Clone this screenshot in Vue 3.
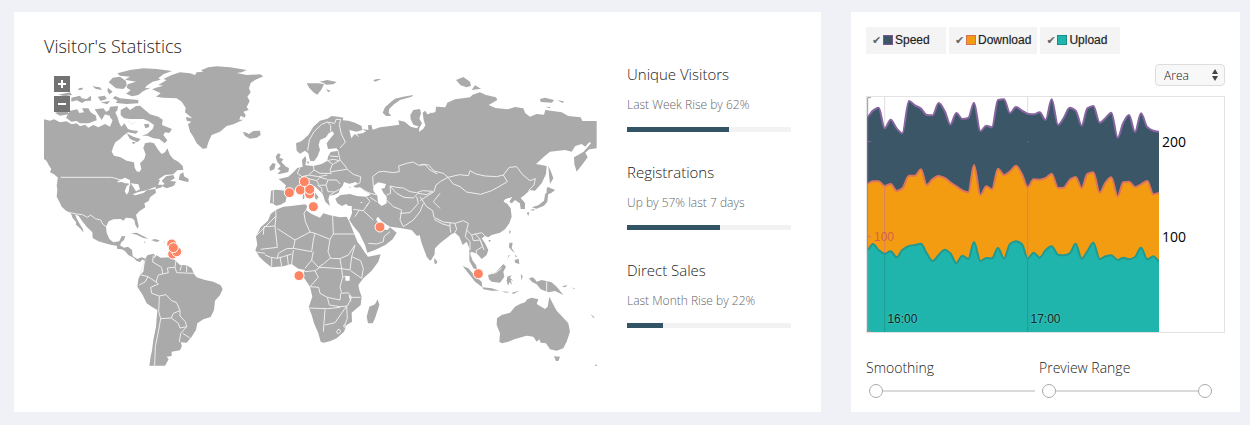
<script setup>
import { ref } from 'vue'

const stats = [
  { title: 'Unique Visitors', note: 'Last Week Rise by 62%', value: 62 },
  { title: 'Registrations', note: 'Up by 57% last 7 days', value: 57 },
  { title: 'Direct Sales', note: 'Last Month Rise by 22%', value: 22 }
]

// Each sheet of the map has its own origin; outlines are local to it.
const sheets = [
  {
    at: 'translate(90 165)',
    land: 'M42,193L60,197 72,193 90,202 110,199 125,208 140,205 150,214 165,209 175,218 190,210 205,217 225,207 240,215 246,200 252,180 262,185 268,205 274,215 283,205 294,222 306,226 325,228 318,236 294,232 280,242 270,252 256,262 250,275 245,290 252,302 270,306 290,317 312,322 314,338 320,349 328,351 334,342 330,325 343,312 347,298 340,280 345,265 360,262 372,265 385,285 395,297 405,292 412,280 420,300 430,312 445,320 458,333 460,345 442,346 430,358 405,360 390,370 375,385 380,390 84,390 82,376 84,368 72,358 60,352 64,342 56,330 50,318 42,312zM395,378L408,364 430,360 434,370 420,378 440,380 428,392 405,388zM446,374L450,358 460,352 462,364 476,372 475,382zM366,103L378,98 400,92 385,90 410,75 400,72 425,60 450,52 480,55 495,60 500,52 520,50 513,46 535,37 560,34 600,37 650,45 635,52 620,54 650,60 690,58 700,64 675,75 662,84 657,100 662,112 652,125 659,138 650,156 656,165 640,170 647,180 644,188 632,182 628,194 640,194 610,208 590,213 570,230 545,240 535,262 530,280 518,281 500,265 490,245 480,230 474,208 484,200 470,197 468,186 487,190 465,172 467,158 455,140 440,130 400,128 378,125 392,115zM638,230L650,233 657,237 670,228 690,227 692,240 680,248 660,251 645,243zM262,55L300,45 340,40 380,42 426,48 400,58 385,70 392,74 368,80 350,92 345,100 362,98 340,108 325,120 306,124 288,116 302,106 290,98 293,88 318,80 285,74 300,65 270,62zM236,82L248,68 270,65 288,78 290,92 280,102 258,100zM256,123L270,130 325,135 325,145 290,147 258,144 262,136 248,130zM187,94L210,97 216,105 198,102zM148,99L160,98 156,104 144,106zM203,125L225,122 230,132 212,138zM212,142L240,138 232,148zM234,98L248,110 238,118 232,108zM124,128L150,122 155,130 170,132 183,122 183,137 166,138 156,144 140,136 124,140zM85,119L120,112 126,120 105,124zM75,174L96,166 112,166 116,178 90,182zM120,167L142,163 148,174 162,172 156,160 175,160 182,172 198,182 200,196 176,205 150,205 140,198 124,200 108,188zM194,163L220,160 228,170 240,165 238,182 225,178 215,195 205,180zM240,155L264,153 262,166 256,172 262,186 254,202 241,188 236,170zM272,165L290,155 300,165 318,153 330,152 345,165 360,178 385,185 398,194 396,210 426,222 418,234 405,232 400,240 412,256 404,265 388,252 370,250 352,242 336,242 352,236 368,222 372,210 355,198 340,192 325,192 300,192 282,190 272,180zM290,235L310,245 332,252 322,262 300,252zM305,260L318,262 310,268zM342,208L356,206 358,216 346,220z',
    water: 'M260,380L285,368 300,376 280,382z',
    border: 'M92,367H245L270,374 300,386M295,196L304,208 316,202'
  },
  {
    at: 'translate(90 540)',
    land: 'M84,0L80,15 82,30 80,50 88,65 95,80 108,92 122,98 128,114 138,126 138,134 150,145 160,157 159,148 148,130 140,115 135,103 146,108 158,125 170,140 187,157 188,174 205,184 225,190 245,195 260,197 262,207 275,208 285,213 295,225 312,234 320,243 330,246 338,238 343,244 348,236 335,232 322,237 308,228 306,210 294,200 282,203 270,196 274,187 282,180 286,168 275,169 268,184 250,187 238,177 230,158 228,140 236,124 250,118 272,117 280,122 288,113 305,115 313,120 316,135 323,146 326,138 322,120 318,105 328,94 346,82 343,70 356,63 360,52 378,38 376,28 395,22 398,14 384,14 390,0zM395,18L408,8 428,14 437,12 430,18 410,25zM303,160L320,158 335,166 355,176 340,174 320,164zM342,185L350,186 342,188zM363,180L376,177 390,182 380,186zM400,185H405V188zM343,242L352,226 370,221 375,226 370,238 380,226 392,233 420,232 435,241 450,255 470,256 485,265 492,282 500,292 525,300 550,305 572,316 578,328 570,345 555,362 552,390 542,411 520,418 502,430 498,450 485,470 470,488 452,487 456,498 450,511 425,515 425,528 410,530 416,538 405,557 358,557 362,530 366,512 370,480 378,440 382,390 365,380 350,370 338,345 322,320 325,298 330,285 340,275 343,255z',
    water: 'M262,9L276,-2 300,0 300,10 284,10 276,4zM302,10L290,18 284,34 290,44 296,36 298,20zM302,10L325,13 330,28 318,34 308,18zM308,43L325,36 352,30 340,39 316,46zM350,30L378,20 376,27z',
    border: 'M122,98L140,102 158,104 172,112 182,105 196,116 212,120 218,132 228,140M345,242L330,284 354,290 378,306 385,312 362,322 365,340 388,348M328,315L345,306 354,290M378,306L385,285 398,282 395,262 368,246 370,226M398,282L415,278 412,264 435,262 438,240M435,262L440,278 490,280M455,256L450,272M470,256L470,276M388,348L408,344 425,362 440,368 450,392 430,400 424,414 392,416 386,395 388,348M450,392L450,408 466,425 470,440 450,444 445,430 424,414M470,440L452,460 448,486M458,460L480,474M392,416L386,450 376,500 374,557'
  },
  {
    at: 'translate(720 180)',
    land: 'M168,250L185,243 205,225 220,200 240,182 262,176 275,168 294,170 310,173 308,181 325,182 345,188 365,198 367,210 350,215 328,210 334,235 344,222 358,232 350,222 368,220 378,214 367,207 385,210 384,196 394,194 398,209 420,202 450,198 478,194 475,181 494,185 512,200 530,205 545,190 538,205 537,216 550,206 556,196 551,180 548,158 556,152 562,163 590,155 588,142 600,140 600,434 440,434 380,436 364,426 350,438 326,438 318,432 306,438 292,430 286,416 302,405 330,402 350,408 378,410 392,404 382,396 360,382 348,383 338,378 330,384 326,376 346,366 330,372 312,366 308,378 300,386 296,398 284,404 268,407 265,418 270,438 256,425 248,402 226,380 216,376 214,384 236,412 228,420 222,402 204,386 180,390 165,394 150,398 140,407 137,425 122,434 108,437 98,430 90,430 93,392 110,389 135,392 137,375 116,357 130,354 145,350 160,337 172,324 188,320 186,300 196,288 199,298 196,316 220,318 245,312 262,302 264,290 272,276 295,272 290,265 264,267 260,250 270,236 282,222 278,214 266,220 258,232 240,240 236,255 240,270 232,290 222,304 210,302 205,280 195,272 180,281 170,272zM107,290L114,280 122,283 118,293 130,297 124,306 138,320 147,324 145,336 130,340 112,343 122,331 112,328 122,318 112,306zM88,322L98,309 107,312 103,328 90,333zM200,70L220,70 235,70 252,72 245,88 232,104 222,98 208,84zM238,65L262,60 290,66 280,73 258,74 250,68zM258,88L272,92 265,97zM428,158L435,142 450,128 465,116 490,110 520,105 515,110 480,120 462,133 448,146 446,158 454,168 438,168zM512,178L511,165 520,150 540,147 543,160 538,176 546,190 540,200 520,194zM400,60L412,57 424,58 404,65zM189,402L194,405 192,418 188,416zM200,304L208,306 204,312z',
    water: 'M400,378L415,367 438,372 434,384 424,386 430,398 440,410 440,430 425,438 414,428 412,408 400,392zM320,374L348,366 352,371 334,383z',
    border: 'M203,272L208,240 222,215 245,193 262,186 272,196 272,215M262,186L284,190 288,178 302,178 298,194 304,222 316,246 300,264M294,272L300,300 316,318 322,328 340,343 362,350 360,368 348,374M262,302L280,298 298,302M270,288L294,290M262,302L278,312 270,330 274,340 240,340 222,330 220,318M280,312L298,302M274,335L320,328M180,322L172,340 186,350 206,345 236,350 262,345M176,352L188,370 206,356 230,362 240,352 262,358M206,345L222,330M230,362L238,376 258,375 264,360 290,360 300,372M232,376L245,384 246,398M258,375L264,395 284,396 298,388M136,392L154,396M100,392V428M400,378L398,350 415,336 430,334 460,338 478,335 476,318 500,310 520,306 536,316 554,312 570,330 592,342M440,405L452,400 450,378 470,382 490,384 510,395 530,398 548,392 578,394M450,378L470,400 492,412 520,414 534,400 560,404 578,394M370,392L392,400 408,404M378,410L390,424 380,438M390,412L410,425M268,407L284,396M188,350L182,376'
  },
  {
    at: 'translate(720 570)',
    land: 'M107,60L130,50 160,47 195,43 202,48 198,60 215,72 240,83 250,70 270,76 300,82 320,80 328,95 340,125 352,155 362,168 375,188 384,200 422,193 415,215 395,242 370,265 355,285 358,300 365,320 362,345 335,368 336,395 320,405 312,425 290,445 270,454 250,458 242,455 235,430 222,400 215,375 206,352 217,320 210,290 200,275 188,258 195,240 175,236 155,222 130,229 95,232 75,217 58,200 46,180 52,165 48,140 62,112 84,92 92,72zM335,45L346,40 385,38 440,30 600,0V150L582,170 584,192 572,212 560,192 552,165 543,136 530,137 515,120 480,114 450,110 425,94 414,80 408,88 418,104 428,118 442,120 450,112 470,128 458,148 436,165 405,180 382,188 375,165 358,130 340,108 328,90 336,70zM413,328L418,345 405,385 398,400 384,400 380,380 388,350 405,343zM584,205L592,215 588,223 583,218z',
    water: 'M316,258H329V272H316zM326,315L332,318 334,338 330,330z',
    border: 'M107,60L108,78 50,136M108,78L105,108 72,110 70,134M105,108L112,172 62,178M112,116L165,150 210,126 196,95 192,70 198,60M165,150L160,175 215,185 220,150 225,130 210,126M225,130L270,148 280,132 278,78M280,132H345M270,148L264,185 272,205 300,206 325,195 345,165M220,185L215,210 235,232 250,222 270,205M160,180L155,222M160,175L140,176 115,190 112,205 130,200 155,192M120,200L125,228M142,198L145,225M95,202V230M75,195L92,202 112,205M50,186L75,190M215,210L195,235M195,245L225,242 240,232 305,236 300,206M225,242L235,262 210,290 236,292 240,310 262,322 268,345 300,350 322,348 335,322H362M305,236L330,240 335,200 362,212 370,236 365,265 332,242M305,236L308,262 300,290 305,310 325,308 335,322M308,262L316,258M206,354L262,356 300,352M255,358L250,425M255,405L285,398 320,348M320,350L322,385 314,405M262,322L300,330 302,310M335,200L345,165M340,58L370,62 385,40M370,62L400,90M345,80L358,60M385,160L410,162 430,155 432,140 450,125M440,30L460,50 485,60 480,90 490,110M480,70L510,68 535,40 530,20M490,110L520,90 540,65 550,40M600,10L580,35 600,55M291,422L297,417 302,424 296,431 290,428zM312,404L318,406 316,413 311,410z'
  },
  {
    at: 'translate(1260 180)',
    land: 'M30,158L46,160 48,140 76,142 82,128 105,118 150,112 158,104 180,97 198,105 228,112 232,120 206,135 226,144 262,148 285,141 310,145 316,160 330,170 350,162 372,164 376,150 425,157 445,168 482,172 487,183 530,183V265L508,268 496,278 503,292 488,312 470,335 463,312 462,292 490,276 513,250 508,246 496,260 485,252 466,258 455,275 435,270 390,275 370,292 348,312 380,318 378,342 365,370 345,392 330,390 314,405 302,414 315,430 315,447 302,447 300,430 285,418 275,430 268,426 278,410 255,416 250,425 262,432 272,450H20zM385,318L392,332 400,355 390,372 387,345zM382,380L405,390 395,398 380,405zM108,60L130,51 150,65 153,77 140,82 122,76zM155,90L165,76 183,86zM360,117L375,113 402,120 396,128 362,126zM411,121L431,124 429,129zM378,140L392,141 388,145z',
    water: '',
    border: 'M0,315L25,314 42,333 70,340 84,352 62,364 48,375 42,395 0,422M84,352L118,344 145,347 150,332 168,342 195,348 230,350 250,345 262,365 240,378 215,392 182,403 140,396 120,380 100,372 84,352M250,345L268,322 290,320 308,344 330,362 346,356 342,375 325,392'
  },
  {
    at: 'translate(1260 570)',
    land: 'M0,0H330L305,15 300,25 312,35 315,50 305,57 300,40 285,30 275,40 270,32 278,20 255,28 250,35 262,42 272,55 275,80 268,100 255,118 240,128 215,135 205,142 195,138 185,145 195,160 205,180 200,195 185,207 172,192 155,185 150,190 158,212 168,225 172,240 160,235 148,212 148,175 140,155 128,165 118,140 105,128 95,132 85,140 60,160 45,175 42,195 30,212 20,200 5,160 0,140zM376,10L385,8 382,35 372,47 350,56 335,52 355,46 372,32zM330,60L345,56 340,62zM320,68L328,66 325,78zM380,-5L405,0 392,6 380,14zM268,120L273,125 268,133zM205,150L213,150 208,157zM268,158L278,158 275,175 285,188 276,182 267,172zM284,210L296,206 298,222 285,218zM285,193L292,202 286,200zM270,195L262,206 266,196zM43,205L51,215 45,223zM128,228L145,235 165,258 185,275 187,292 165,275 145,250zM187,292L215,295 238,302 215,302 190,298zM204,255L225,250 250,222 258,230 250,245 253,260 240,278 215,275 207,268zM262,260L275,256 270,264 280,272 272,270 276,284 268,276 264,288 260,272zM302,252L308,258 305,272zM245,304L270,306 258,308zM275,308L298,302 280,312zM327,265L338,262 345,268 350,275 365,270 395,277 410,290 430,315 405,303 385,307 362,298 350,283 335,275zM425,290L442,284 436,292zM231,385L245,375 270,368 285,350 300,342 315,337 322,328 335,323 355,328 350,342 375,357 383,350 388,320 398,340 410,362 425,378 445,400 450,425 440,455 430,475 410,482 390,478 378,460 362,458 358,448 350,455 340,440 320,437 285,447 265,455 245,460 238,455 240,430 230,405zM402,499L420,500 415,513 408,513zM512,373L523,381 520,384zM456,292L465,296 462,298zM526,524H531V528H526z',
    water: '',
    border: 'M0,20L20,50 38,62 42,82 70,96 105,100 130,92 145,100 140,120 155,135 185,128 195,138M42,88L68,102 90,108 90,98M90,108L92,128M105,100L110,118 104,128M140,120L136,140 150,155 150,180M155,135L160,152 180,150 188,170 168,182 170,192M165,130L180,148 192,180M380,275V306M208,250L228,248 245,234'
  }
]

const markers = [
  [515, 732], [518, 762], [530, 755], [520, 743],
  [868, 578], [901, 570], [929, 582], [929, 568], [913, 545], [940, 620],
  [1140, 681], [897, 827], [1435, 821]
]

const xs = [36, 54, 71, 89, 107, 125, 142, 162, 180, 198, 215, 233, 251, 269, 286, 304, 322, 340, 357, 376, 394, 411, 429, 447, 465, 483, 501, 518, 536, 554, 572, 590, 609, 626, 644, 662, 680, 697, 715, 734, 752, 769, 788, 805, 822, 840, 858, 877, 895, 912]
const levels = {
  speed: [80, 62, 53, 115, 89, 115, 130, 33, 46, 56, 75, 76, 39, 63, 104, 69, 87, 84, 38, 124, 107, 112, 30, 28, 69, 51, 62, 71, 73, 67, 90, 28, 105, 84, 53, 62, 107, 55, 48, 98, 84, 68, 143, 98, 75, 126, 70, 112, 122, 125],
  download: [281, 274, 274, 288, 282, 303, 295, 257, 257, 238, 285, 267, 258, 264, 277, 289, 301, 307, 225, 315, 289, 298, 236, 255, 244, 227, 253, 291, 268, 269, 264, 251, 294, 293, 270, 261, 294, 252, 247, 308, 277, 262, 319, 277, 275, 291, 283, 273, 313, 309],
  upload: [480, 462, 480, 491, 484, 502, 480, 468, 465, 461, 490, 513, 495, 479, 490, 519, 497, 507, 456, 513, 504, 505, 474, 506, 462, 454, 463, 505, 488, 503, 480, 469, 494, 496, 490, 461, 506, 484, 458, 507, 499, 496, 510, 503, 508, 501, 473, 508, 499, 512]
}

// Monotone cubic: the slope is zero at each peak and dip.
function curve(ys) {
  const slope = ys.map((y, i) => {
    if (i === 0 || i === ys.length - 1) return 0
    const a = (y - ys[i - 1]) / (xs[i] - xs[i - 1])
    const b = (ys[i + 1] - y) / (xs[i + 1] - xs[i])
    return a * b <= 0 ? 0 : (2 * a * b) / (a + b)
  })
  let d = `M${xs[0]},${ys[0]}`
  for (let i = 1; i < ys.length; i++) {
    const h = (xs[i] - xs[i - 1]) / 3
    d += `C${xs[i - 1] + h},${ys[i - 1] + slope[i - 1] * h} ${xs[i] - h},${ys[i] - slope[i] * h} ${xs[i]},${ys[i]}`
  }
  return d
}

const series = ref([
  { id: 'speed', name: 'Speed', on: true },
  { id: 'download', name: 'Download', on: true },
  { id: 'upload', name: 'Upload', on: true }
])
const kind = ref('Area')
const smoothing = ref(0)
const from = ref(0)
const to = ref(100)
</script>

<template>
  <main class="page">
    <section class="card visitors">
      <h2 class="title">Visitor's Statistics</h2>
      <div class="split">
        <div class="map">
          <svg class="world" viewBox="132 198 1659 900" role="img" aria-label="World map of visitors">
            <g v-for="s in sheets" :key="s.at" :transform="s.at">
              <path class="land" :d="s.land" />
            </g>
            <g v-for="s in sheets" :key="s.at" :transform="s.at">
              <path class="water" :d="s.water" />
              <path class="border" :d="s.border" />
            </g>
            <circle v-for="(m, i) in markers" :key="i" class="marker" :cx="m[0]" :cy="m[1]" r="15" />
          </svg>
          <div class="zoom">
            <button type="button" aria-label="Zoom in">
              <svg viewBox="0 0 16 16"><path d="M4 8h8M8 4v8" /></svg>
            </button>
            <button type="button" aria-label="Zoom out">
              <svg viewBox="0 0 16 16"><path d="M4 8h8" /></svg>
            </button>
          </div>
        </div>
        <div class="stats">
          <article v-for="s in stats" :key="s.title" class="stat">
            <h3>{{ s.title }}</h3>
            <p>{{ s.note }}</p>
            <div class="bar"><div class="fill" :style="{ width: s.value + '%' }"></div></div>
          </article>
        </div>
      </div>
    </section>

    <section class="card traffic">
      <div class="legend">
        <label v-for="s in series" :key="s.id" class="key">
          <input v-model="s.on" type="checkbox" />
          <span class="swatch" :class="s.id"></span>
          <span>{{ s.name }}</span>
        </label>
      </div>
      <div class="picker">
        <select v-model="kind" aria-label="Chart type">
          <option>Area</option>
          <option>Bar</option>
          <option>Line</option>
        </select>
        <svg class="arrows" viewBox="0 0 6 12"><path d="M0 5L3 0 6 5zM0 7L3 12 6 7z" /></svg>
      </div>
      <div class="chart">
        <div class="plot">
          <svg viewBox="36 21 876 705" preserveAspectRatio="none" role="img" aria-label="Speed, download and upload">
            <path class="rule" d="M89,21V726M518,21V726" />
            <g v-for="s in series" v-show="s.on" :key="s.id" :class="s.id">
              <path class="area" :d="curve(levels[s.id]) + 'V726H36z'" />
              <path class="edge" :d="curve(levels[s.id])" />
            </g>
            <path class="rule warm" d="M89,290V489M518,293V503" />
            <path class="rule" d="M89,493V726M518,507V726" />
            <path class="axis" d="M48,23H38V80M38,480V724H48" />
            <path class="axis violet" d="M38,80V281M38,155H48M516,155H520" />
            <path class="axis coral" d="M38,281V480M38,440H48" />
          </svg>
          <span class="inner">100</span>
          <span class="time first">16:00</span>
          <span class="time second">17:00</span>
        </div>
        <div class="scale">
          <span class="high">200</span>
          <span class="low">100</span>
        </div>
      </div>
      <div class="sliders">
        <div class="control">
          <label for="smoothing">Smoothing</label>
          <div class="track">
            <input id="smoothing" v-model="smoothing" type="range" min="0" max="100" />
          </div>
        </div>
        <div class="control">
          <label for="from">Preview Range</label>
          <div class="track">
            <input id="from" v-model="from" type="range" min="0" max="100" />
            <input v-model="to" class="upper" type="range" min="0" max="100" aria-label="Preview range end" />
          </div>
        </div>
      </div>
    </section>
  </main>
</template>

<style>
body {
  background: #f0f1f7;
}
</style>

<style scoped>
* {
  box-sizing: border-box;
}
.page {
  display: grid;
  grid-template-columns: 807fr 389fr;
  gap: 30px;
  padding: 12px 10px 13px 14px;
  font-family: "Open Sans", "Noto Sans", sans-serif;
  font-weight: 300;
  color: #222;
}
.card {
  background: #fff;
  min-width: 0;
}
.visitors {
  padding: 23px 30px 46px;
}
.title {
  margin: 0 0 9px;
  font-size: 18px;
  line-height: 22px;
  font-weight: 300;
}
.split {
  display: grid;
  grid-template-columns: 553fr 164fr;
  gap: 30px;
}
.map {
  position: relative;
}
.world {
  display: block;
  width: 100%;
}
.land {
  fill: #aaa;
}
.water {
  fill: #fff;
}
.border {
  fill: none;
  stroke: #eee;
  stroke-width: 3;
  stroke-linejoin: round;
}
.marker {
  fill: #ff8464;
  stroke: #fff;
  stroke-width: 3;
}
.zoom {
  position: absolute;
  left: 10px;
  top: 10px;
  display: grid;
  gap: 4px;
}
.zoom button {
  display: block;
  width: 16px;
  height: 16px;
  padding: 0;
  border: 0;
  background: #737373;
}
.zoom svg {
  display: block;
  fill: none;
  stroke: #fff;
  stroke-width: 2;
}
.stat {
  padding-bottom: 32px;
}
.stat h3 {
  margin: 0 0 15px;
  font-size: 15px;
  line-height: 16px;
  font-weight: 300;
}
.stat p {
  margin: 0 0 14px;
  font-size: 12px;
  line-height: 16px;
  color: #666;
}
.bar {
  height: 5px;
  background: #f2f2f2;
}
.fill {
  height: 100%;
  background: #335464;
}
.traffic {
  padding: 15px 15px 12px;
}
.legend {
  display: flex;
  gap: 3px;
}
.key {
  display: flex;
  align-items: center;
  gap: 2px;
  min-width: 80px;
  height: 27px;
  padding: 0 6px 2px;
  background: #f4f4f4;
  font: 12px "Liberation Sans", sans-serif;
  color: #222;
  text-shadow: 0 0 1px #aaa;
}
.key input {
  appearance: none;
  width: 9px;
  height: 12px;
  margin: 0;
}
.key input::before {
  content: "✔";
  display: block;
  font: 11px/14px "DejaVu Sans", sans-serif;
  color: #666;
  opacity: 0;
}
.key input:checked::before {
  opacity: 1;
}
.swatch {
  width: 10px;
  height: 10px;
  border: 1px solid;
}
.swatch.speed {
  background: #3b5767;
  border-color: #7b5596;
}
.swatch.download {
  background: #f39c12;
  border-color: #d66f55;
}
.swatch.upload {
  background: #20b5ac;
  border-color: #188d86;
}
.picker {
  position: relative;
  width: 70px;
  margin: 10px 0 10px auto;
}
select {
  appearance: none;
  display: block;
  width: 100%;
  height: 22px;
  padding: 0 8px;
  border: 1px solid #ddd;
  border-radius: 4px;
  background: #f8f8f8;
  font: 300 12px "Open Sans", sans-serif;
  color: #111;
}
.arrows {
  position: absolute;
  right: 7px;
  top: 5px;
  width: 6px;
  height: 12px;
  fill: #444;
  pointer-events: none;
}
.chart {
  display: grid;
  grid-template-columns: 292fr 65fr;
  height: 237px;
  border: 1px solid #e3e3e3;
}
.plot,
.scale {
  position: relative;
}
.plot svg {
  display: block;
  width: 100%;
  height: 235px;
}
.area {
  stroke: none;
}
.edge {
  fill: none;
  stroke-width: 6;
}
.speed .area {
  fill: #3b5767;
}
.speed .edge {
  stroke: #8765a0;
}
.download .area {
  fill: #f39c12;
}
.download .edge {
  stroke: #dd7460;
}
.upload .area {
  fill: #20b5ac;
}
.upload .edge {
  stroke: #22988f;
}
.rule {
  fill: none;
  stroke: rgba(0, 0, 0, 0.13);
  stroke-width: 3;
}
.rule.warm {
  stroke: #dd8065;
}
.axis {
  fill: none;
  stroke: #999;
  stroke-width: 3;
}
.axis.violet {
  stroke: #8765a0;
}
.axis.coral {
  stroke: #dd7460;
}
.inner,
.time {
  position: absolute;
  font: 12px/14px "Liberation Sans", sans-serif;
}
.inner {
  left: 7px;
  top: 133px;
  color: #d5604c;
}
.time {
  bottom: 6px;
  color: #062524;
  text-shadow: 0 0 2px #7fd6d0;
}
.first {
  left: 7%;
}
.second {
  left: 56%;
}
.scale span {
  position: absolute;
  left: 3px;
  font-size: 14px;
  line-height: 20px;
  font-weight: 400;
  color: #000;
}
.high {
  top: 35px;
}
.low {
  top: 130px;
}
.sliders {
  display: grid;
  grid-template-columns: 169fr 173fr;
  gap: 4px;
  padding: 25px 13px 0 0;
}
.control label {
  display: block;
  font-size: 14px;
  line-height: 20px;
}
.track {
  display: grid;
  margin: 6px 0 0 3px;
}
.track input {
  appearance: none;
  grid-area: 1 / 1;
  width: 100%;
  height: 14px;
  margin: 0;
  background: linear-gradient(#dadada, #dadada) center / 100% 2px no-repeat;
}
.track input.upper {
  background: none;
  pointer-events: none;
}
.track input::-webkit-slider-thumb {
  appearance: none;
  width: 14px;
  height: 14px;
  border: 1px solid #aaa;
  border-radius: 50%;
  background: #fff;
  pointer-events: auto;
}
</style>
